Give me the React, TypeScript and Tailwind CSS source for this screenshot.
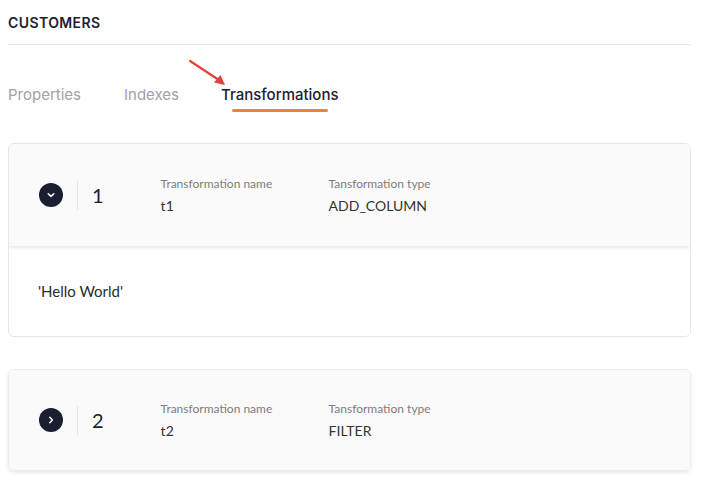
import React from "react";

function Chevron({ open }: { open: boolean }) {
  return (
    <div className="flex h-[24px] w-[24px] shrink-0 items-center justify-center rounded-full bg-[#1b1e30]">
      <svg width="12" height="12" viewBox="0 0 12 12" fill="none">
        {open ? (
          <path d="M3.2 4.8 L6 7.4 L8.8 4.8" stroke="white" strokeWidth="1.5" strokeLinecap="round" strokeLinejoin="round" />
        ) : (
          <path d="M4.8 3.2 L7.4 6 L4.8 8.8" stroke="white" strokeWidth="1.5" strokeLinecap="round" strokeLinejoin="round" />
        )}
      </svg>
    </div>
  );
}

function Header({ n, name, type, open, h }: { n: string; name: string; type: string; open: boolean; h: string }) {
  return (
    <div className={`relative z-10 flex items-center bg-[#fafafa] pl-[30px] shadow-[0_2px_4px_rgba(0,0,0,0.09)] ${h}`}>
      <Chevron open={open} />
      <div className="ml-[14px] h-[29px] w-px bg-[#e4e4e4]" />
      <div className="ml-[14px] text-[20px] leading-none text-[#1b1e2b]" style={{ fontFamily: "Lato, sans-serif" }}>{n}</div>
      <div className="ml-[57px] flex">
        <div className="w-[168px]">
          <div className="text-[12px] leading-[16px] text-[#7d7d7d]">Transformation name</div>
          <div className="mt-[5px] text-[14px] leading-[18px] text-[#333]">{name}</div>
        </div>
        <div>
          <div className="text-[12px] leading-[16px] text-[#7d7d7d]">Tansformation type</div>
          <div className="mt-[5px] text-[14px] leading-[18px] text-[#333]">{type}</div>
        </div>
      </div>
    </div>
  );
}

export default function App() {
  return (
    <div className="relative min-h-[503px] w-[715px] bg-white pl-2 pr-6" style={{ fontFamily: "Lato, 'Liberation Sans', sans-serif" }}>
      <div
        className="flex h-[45px] items-center border-b border-[#e8e8e8] pt-[1px] text-[14px] font-semibold tracking-[0.4px] text-[#1d2030]"
        style={{ fontFamily: "Inter, sans-serif" }}
      >
        CUSTOMERS
      </div>

      <div className="relative mt-[40px] flex text-[15px]" style={{ fontFamily: "Inter, sans-serif" }}>
        <div className="w-[116px] leading-[20px] text-[#a1a1a8]">Properties</div>
        <div className="w-[97px] leading-[20px] text-[#a1a1a8]">Indexes</div>
        <div className="flex flex-col">
          <div className="leading-[20px] font-medium text-[#1d2030]">Transformations</div>
          <div className="mx-[11px] mt-[4px] h-[3px] rounded-full bg-[#f5822a]" />
        </div>
        <svg className="absolute left-[173px] top-[-30px]" width="50" height="36" viewBox="0 0 50 36" fill="none">
          <path d="M9 6 L41 27" stroke="#e5413a" strokeWidth="2.2" strokeLinecap="round" />
          <path d="M44 30 L33 27.5 L39.5 20 Z" fill="#e5413a" />
        </svg>
      </div>

      <div className="mt-[31px] overflow-hidden rounded-[6px] border border-[#e6e6e6]">
        <Header n="1" name="t1" type="ADD_COLUMN" open h="h-[102px]" />
        <div className="flex h-[90px] items-center bg-white pl-[29px] text-[15px] text-[#2c2c2c]">'Hello World'</div>
      </div>

      <div className="mt-[32px] overflow-hidden rounded-[6px] border border-[#ececec] shadow-[0_2px_4px_rgba(0,0,0,0.09)]">
        <Header n="2" name="t2" type="FILTER" open={false} h="h-[100px]" />
      </div>
    </div>
  );
}
